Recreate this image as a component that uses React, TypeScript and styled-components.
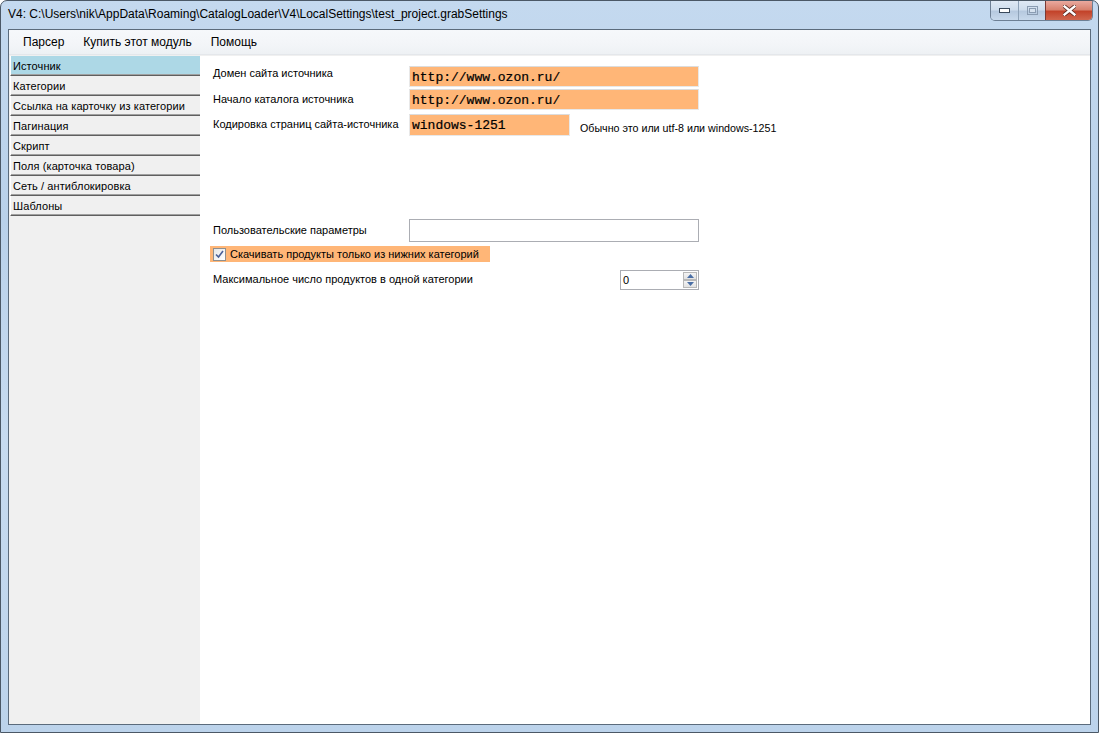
import React from "react";
import styled, { createGlobalStyle } from "styled-components";

const GlobalStyle = createGlobalStyle`
  html, body {
    margin: 0;
    padding: 0;
    background: #ffffff;
  }
  * {
    box-sizing: border-box;
  }
`;

const Window = styled.div`
  width: 1099px;
  height: 733px;
  display: flex;
  flex-direction: column;
  border: 1px solid #4b5866;
  border-radius: 7px 7px 0 0;
  background: linear-gradient(180deg, #c4d9ef 0%, #b9d1ea 30%, #c7dbf0 60%, #bcd3eb 100%);
  overflow: hidden;
`;

const TitleBar = styled.div`
  height: 28px;
  flex: 0 0 28px;
  display: flex;
  align-items: flex-start;
  padding-left: 7px;
`;

const TitleText = styled.div`
  flex: 1;
  padding-top: 6px;
  font-family: "Liberation Sans", Arial, sans-serif;
  font-size: 12px;
  color: #000;
  white-space: nowrap;
`;

const CaptionGroup = styled.div`
  display: flex;
  margin-right: 5px;
  border: 1px solid #6d7f94;
  border-top: none;
  border-radius: 0 0 5px 5px;
  overflow: hidden;
  height: 20px;
`;

const CaptionButton = styled.div<{ $w: number; $close?: boolean }>`
  width: ${({ $w }) => $w}px;
  height: 19px;
  display: flex;
  align-items: center;
  justify-content: center;
  border-left: ${({ $close }) => ($close ? "1px solid #7a3a34" : "1px solid #8ea2b8")};
  background: ${({ $close }) =>
    $close
      ? "linear-gradient(180deg, #e9a99f 0%, #d7826f 45%, #c3432a 55%, #d0674f 100%)"
      : "linear-gradient(180deg, #dfe9f5 0%, #cfdded 45%, #b6c9df 55%, #c8d9ec 100%)"};
  &:first-child {
    border-left: none;
  }
`;

const Client = styled.div`
  flex: 1;
  margin: 0 7px 7px 7px;
  border: 1px solid #5b6b7c;
  background: #f0f0f0;
  display: flex;
  flex-direction: column;
`;

const MenuBar = styled.div`
  height: 25px;
  flex: 0 0 25px;
  display: flex;
  align-items: center;
  padding-left: 7px;
  background: linear-gradient(180deg, #f6f8fb 0%, #f3f5f8 60%, #eef1f4 100%);
  border-bottom: 1px solid #e4e7eb;
`;

const MenuItem = styled.div`
  padding: 0 7px;
  margin-right: 5px;
  font-family: "Liberation Sans", Arial, sans-serif;
  font-size: 12px;
  color: #000;
`;

const Body = styled.div`
  flex: 1;
  display: flex;
  padding-top: 1px;
  background: #f0f0f0;
`;

const Sidebar = styled.div`
  width: 192px;
  flex: 0 0 192px;
  padding-left: 1px;
  background: #f0f0f0;
  border-right: 1px solid #ffffff;
`;

const NavItem = styled.div<{ $active?: boolean }>`
  height: 20px;
  display: flex;
  align-items: center;
  padding-left: 2px;
  padding-top: 1px;
  font-family: "Liberation Sans", Arial, sans-serif;
  font-size: 11px;
  letter-spacing: 0.1px;
  color: #000;
  white-space: nowrap;
  background: ${({ $active }) => ($active ? "#add8e6" : "#f0f0f0")};
  border-left: 1px solid #ffffff;
  border-bottom: 1px solid #5f5f5f;
  box-shadow: inset 0 -1px 0 #a0a0a0;
`;

const Main = styled.div`
  flex: 1;
  background: #ffffff;
  padding: 10px 0 0 12px;
  display: flex;
  flex-direction: column;
`;

const FieldRow = styled.div<{ $top: number; $h: number }>`
  display: flex;
  align-items: center;
  margin-top: ${({ $top }) => $top}px;
  height: ${({ $h }) => $h}px;
`;

const Label = styled.div<{ $w: number; $shift?: number }>`
  width: ${({ $w }) => $w}px;
  flex: 0 0 ${({ $w }) => $w}px;
  font-family: "Liberation Sans", Arial, sans-serif;
  font-size: 11px;
  color: #000;
  white-space: nowrap;
  position: relative;
  top: ${({ $shift }) => $shift ?? 0}px;
`;

const TextBox = styled.div<{ $w: number; $h: number; $hot?: boolean }>`
  width: ${({ $w }) => $w}px;
  height: ${({ $h }) => $h}px;
  display: flex;
  align-items: center;
  padding-left: 2px;
  padding-top: 1px;
  border: 1px solid ${({ $hot }) => ($hot ? "#e8e8e8" : "#abadb3")};
  border-top-color: ${({ $hot }) => ($hot ? "#dcdcdc" : "#abadb3")};
  background: ${({ $hot }) => ($hot ? "#ffb677" : "#ffffff")};
  font-family: "Liberation Mono", "Courier New", monospace;
  font-size: 13px;
  -webkit-text-stroke: 0.2px #000;
  color: #000;
  white-space: nowrap;
`;

const Hint = styled.div`
  margin-left: 10px;
  padding-top: 6px;
  font-family: "Liberation Sans", Arial, sans-serif;
  font-size: 10.7px;
  color: #000;
`;

const CheckRow = styled.div`
  margin-top: 4px;
  margin-left: -3px;
  width: 280px;
  height: 16px;
  display: flex;
  align-items: center;
  background: #ffb677;
  padding-left: 3px;
`;

const CheckBox = styled.div`
  width: 13px;
  height: 13px;
  border: 1px solid #8e8f8f;
  background: linear-gradient(135deg, #e6e6e6 0%, #ffffff 100%);
  display: flex;
  align-items: center;
  justify-content: center;
  margin-right: 4px;
`;

const CheckText = styled.div`
  font-family: "Liberation Sans", Arial, sans-serif;
  font-size: 11px;
  color: #000;
  white-space: nowrap;
`;

const Spinner = styled.div`
  width: 79px;
  height: 20px;
  border: 1px solid #abadb3;
  display: flex;
  background: #fff;
`;

const SpinValue = styled.div`
  flex: 1;
  padding-left: 2px;
  display: flex;
  align-items: center;
  font-family: "Liberation Sans", Arial, sans-serif;
  font-size: 11px;
  color: #000;
`;

const SpinButtons = styled.div`
  width: 15px;
  display: flex;
  flex-direction: column;
  padding: 1px 1px 1px 0;
`;

const SpinButton = styled.div`
  flex: 1;
  display: flex;
  align-items: center;
  justify-content: center;
  border: 1px solid #b8b8b8;
  background: linear-gradient(180deg, #f4f4f4 0%, #e2e2e2 100%);
`;

const navItems = [
  "Источник",
  "Категории",
  "Ссылка на карточку из категории",
  "Пагинация",
  "Скрипт",
  "Поля (карточка товара)",
  "Сеть / антиблокировка",
  "Шаблоны",
];

const App = () => {
  return (
    <>
      <GlobalStyle />
      <Window>
        <TitleBar>
          <TitleText>
            V4: C:\Users\nik\AppData\Roaming\CatalogLoader\V4\LocalSettings\test_project.grabSettings
          </TitleText>
          <CaptionGroup>
            <CaptionButton $w={27}>
              <svg width="11" height="5" viewBox="0 0 11 5">
                <rect x="0.5" y="0.5" width="10" height="4" fill="#fff" stroke="#3a4a5c" />
              </svg>
            </CaptionButton>
            <CaptionButton $w={27}>
              <svg width="11" height="9" viewBox="0 0 11 9">
                <rect x="0.5" y="0.5" width="10" height="8" fill="none" stroke="#8a9cb2" />
                <rect x="2.5" y="2.5" width="6" height="4" fill="#d6e2ef" stroke="#8a9cb2" />
              </svg>
            </CaptionButton>
            <CaptionButton $w={47} $close>
              <svg width="13" height="11" viewBox="0 0 13 11">
                <path
                  d="M1 1 L12 10 M12 1 L1 10"
                  stroke="#5a2a22"
                  strokeWidth="4"
                  strokeLinecap="square"
                />
                <path
                  d="M1.5 1.5 L11.5 9.5 M11.5 1.5 L1.5 9.5"
                  stroke="#ffffff"
                  strokeWidth="2.4"
                  strokeLinecap="square"
                />
              </svg>
            </CaptionButton>
          </CaptionGroup>
        </TitleBar>
        <Client>
          <MenuBar>
            <MenuItem>Парсер</MenuItem>
            <MenuItem>Купить этот модуль</MenuItem>
            <MenuItem>Помощь</MenuItem>
          </MenuBar>
          <Body>
            <Sidebar>
              {navItems.map((title, i) => (
                <NavItem key={title} $active={i === 0}>
                  {title}
                </NavItem>
              ))}
            </Sidebar>
            <Main>
              <FieldRow $top={0} $h={21}>
                <Label $w={196} $shift={-4}>
                  Домен сайта источника
                </Label>
                <TextBox $w={290} $h={21} $hot>
                  http://www.ozon.ru/
                </TextBox>
              </FieldRow>
              <FieldRow $top={2} $h={21}>
                <Label $w={196} $shift={-1}>
                  Начало каталога источника
                </Label>
                <TextBox $w={290} $h={21} $hot>
                  http://www.ozon.ru/
                </TextBox>
              </FieldRow>
              <FieldRow $top={4} $h={22}>
                <Label $w={196} $shift={-1}>
                  Кодировка страниц сайта-источника
                </Label>
                <TextBox $w={161} $h={22} $hot>
                  windows-1251
                </TextBox>
                <Hint>Обычно это или utf-8 или windows-1251</Hint>
              </FieldRow>
              <FieldRow $top={83} $h={23}>
                <Label $w={196} $shift={-1}>
                  Пользовательские параметры
                </Label>
                <TextBox $w={290} $h={23} />
              </FieldRow>
              <CheckRow>
                <CheckBox>
                  <svg width="9" height="9" viewBox="0 0 9 9">
                    <path
                      d="M1 4.5 L3.5 7 L8 1"
                      fill="none"
                      stroke="#4a5f97"
                      strokeWidth="1.6"
                    />
                  </svg>
                </CheckBox>
                <CheckText>Скачивать продукты только из нижних категорий</CheckText>
              </CheckRow>
              <FieldRow $top={8} $h={20}>
                <Label $w={407} $shift={-1}>
                  Максимальное число продуктов в одной категории
                </Label>
                <Spinner>
                  <SpinValue>0</SpinValue>
                  <SpinButtons>
                    <SpinButton>
                      <svg width="7" height="4" viewBox="0 0 7 4">
                        <path d="M0 4 L3.5 0 L7 4 Z" fill="#4a6ea5" />
                      </svg>
                    </SpinButton>
                    <SpinButton>
                      <svg width="7" height="4" viewBox="0 0 7 4">
                        <path d="M0 0 L3.5 4 L7 0 Z" fill="#4a6ea5" />
                      </svg>
                    </SpinButton>
                  </SpinButtons>
                </Spinner>
              </FieldRow>
            </Main>
          </Body>
        </Client>
      </Window>
    </>
  );
};

export default App;
